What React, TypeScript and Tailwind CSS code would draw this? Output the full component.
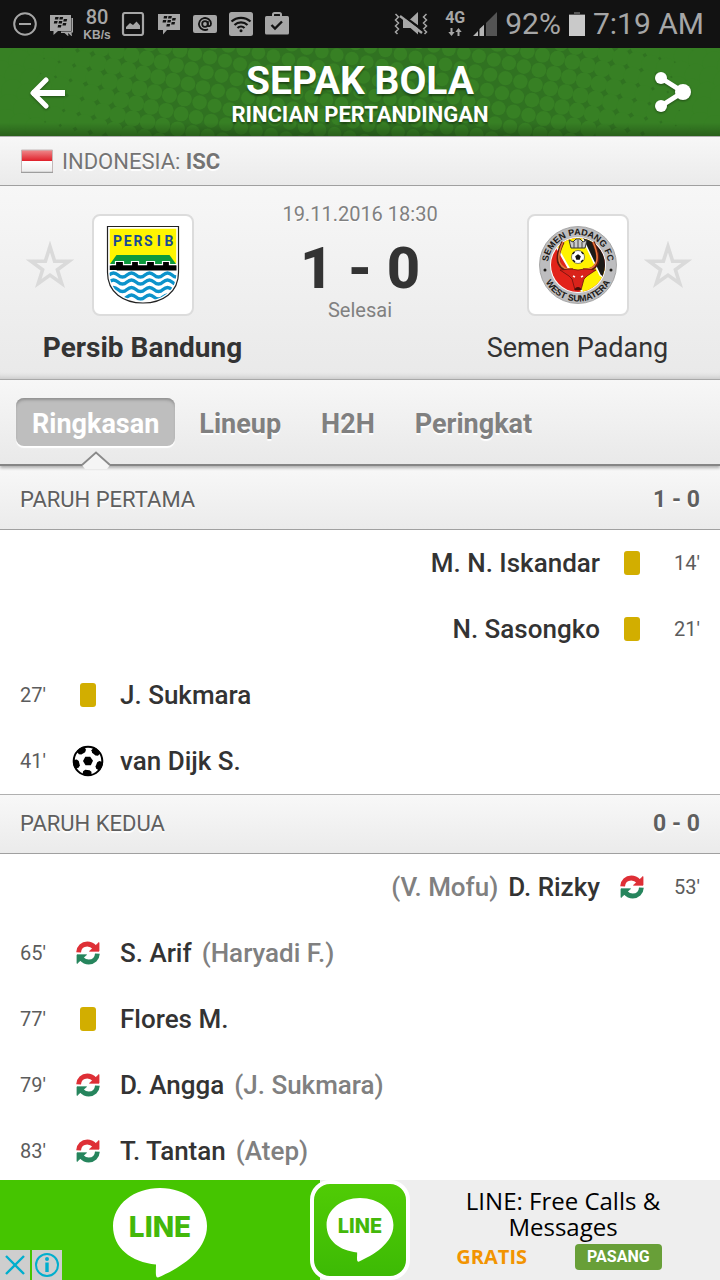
import type { ReactNode } from "react";

type Side = "home" | "away";
type Kind = "card" | "goal" | "sub";

interface MatchEvent {
  side: Side;
  kind: Kind;
  minute: string;
  player: string;
  other?: string;
}

const firstHalf: MatchEvent[] = [
  { side: "away", kind: "card", minute: "14'", player: "M. N. Iskandar" },
  { side: "away", kind: "card", minute: "21'", player: "N. Sasongko" },
  { side: "home", kind: "card", minute: "27'", player: "J. Sukmara" },
  { side: "home", kind: "goal", minute: "41'", player: "van Dijk S." },
];

const secondHalf: MatchEvent[] = [
  { side: "away", kind: "sub", minute: "53'", player: "D. Rizky", other: "(V. Mofu)" },
  { side: "home", kind: "sub", minute: "65'", player: "S. Arif", other: "(Haryadi F.)" },
  { side: "home", kind: "card", minute: "77'", player: "Flores M." },
  { side: "home", kind: "sub", minute: "79'", player: "D. Angga", other: "(J. Sukmara)" },
  { side: "home", kind: "sub", minute: "83'", player: "T. Tantan", other: "(Atep)" },
];

/* ---------- status bar ---------- */

function BbmGlyph() {
  return (
    <g fill="#121212">
      <path d="M5.5 3h3.4l-.6 2.400H5zM10 3h3.400l-.6 2.400H9.500zM4.500 7h3.400l-.6 2.400H4zM9.200 7h3.400l-.6 2.400H8.700zM14 5h3.400l-.6 2.400h-3.400zM13.200 9h3.400l-.6 2.400h-3.400zM8.300 11h3.400l-.6 2.400H7.800z" />
    </g>
  );
}

function StatusBar() {
  return (
    <div className="flex h-12 shrink-0 items-center justify-between bg-[#121212] pr-4 pl-[13px] text-[#a6a6a6]">
      <div className="flex items-center gap-3">
        <svg className="h-6 w-6" viewBox="0 0 24 24" fill="none" stroke="currentColor" strokeWidth="2">
          <circle cx="12" cy="12" r="10.800" />
          <path d="M6 12h12" />
        </svg>
        <svg className="h-6 w-6" viewBox="0 0 24 24" fill="currentColor">
          <path d="M22.500 6h1.500v14.500h-1.500l.5 4-4-3.500.5 3.500-4-3.500h-3.500v-1.500h10.500z" />
          <path d="M1 3h21v16H9l-4.500 4v-4H1z" />
          <g transform="translate(.8 2)">
            <BbmGlyph />
          </g>
        </svg>
        <div className="flex w-6 flex-col items-center">
          <span className="font-[Roboto] text-xl leading-[22px] font-medium">80</span>
          <span className="font-['Liberation_Sans'] text-xs leading-[14px] font-bold">KB/s</span>
        </div>
        <svg className="h-6 w-6" viewBox="0 0 24 24">
          <rect x="2" y="1" width="20" height="22" rx="2" fill="none" stroke="currentColor" strokeWidth="2.200" />
          <path d="M5 17v-2l4-4 3 2 3.500-3.500L19 13.500V17z" fill="currentColor" />
        </svg>
        <svg className="h-6 w-6" viewBox="0 0 24 24" fill="currentColor">
          <path d="M1 2h22v16H10l-4 4.500V18H1z" />
          <g transform="translate(1.500 1)">
            <BbmGlyph />
          </g>
        </svg>
        <svg className="h-6 w-6" viewBox="0 0 24 24">
          <rect x="0" y="3" width="24" height="18" rx="2" fill="currentColor" />
          <g fill="none" stroke="#121212" strokeWidth="1.800">
            <circle cx="12" cy="12" r="2.800" />
            <path d="M14.800 9v4.200c0 1.600 3.200 1.400 3.200-1.400a6 6 0 1 0-3 5.400" />
          </g>
        </svg>
        <svg className="h-6 w-6" viewBox="0 0 24 24">
          <rect x="0" y="0" width="24" height="24" rx="2.500" fill="currentColor" />
          <g fill="none" stroke="#121212" strokeWidth="2.200">
            <path d="M2.500 9.500a14 14 0 0 1 19 0M5.500 13a9.500 9.500 0 0 1 13 0M8.500 16a5 5 0 0 1 7 0" />
          </g>
          <circle cx="12" cy="18.800" r="1.500" fill="#121212" />
        </svg>
        <svg className="h-6 w-6" viewBox="0 0 24 24">
          <path d="M8 5V2.500Q8 1 9.500 1h5Q16 1 16 2.500V5" fill="none" stroke="currentColor" strokeWidth="2" />
          <rect x="0" y="4" width="24" height="18.500" rx="1.500" fill="currentColor" />
          <path d="M6.500 13l3.500 3.500 7-7" fill="none" stroke="#121212" strokeWidth="2.400" />
        </svg>
      </div>
      <div className="flex items-center">
        <svg className="mr-4 h-6 w-9" viewBox="0 0 36 24" fill="currentColor">
          <path d="M2.500 2l3 3-3 3 3 3-3 3 3 3-3 3 2 2M33.500 2l-3 3 3 3-3 3 3 3-3 3 3 3-2 2" fill="none" stroke="currentColor" strokeWidth="1.500" />
          <path d="M25 0v22.500L17.500 16H10V7h7.500z" />
          <path d="M7 1.500l23 17" stroke="#121212" strokeWidth="2.500" />
          <path d="M7 4l22 17" stroke="currentColor" strokeWidth="2.400" />
        </svg>
        <div className="mr-2 flex flex-col items-center">
          <span className="font-[Roboto] text-base leading-3 font-bold">4G</span>
          <svg className="mt-1 h-2 w-4" viewBox="0 0 16 8" fill="currentColor">
            <path d="M3.500 0h2v4h2.200L4.500 8 1.300 4h2.200zM10.500 8h2V4h2.200L11.500 0 8.300 4h2.200z" />
          </svg>
        </div>
        <svg className="mr-2 h-6 w-6" viewBox="0 0 24 24">
          <path d="M24 0v24H13V11z" fill="#545454" />
          <path d="M0 24l5-5v5zM6.500 24v-7L11 12.800V24z" fill="#b5b5b5" />
        </svg>
        <span className="mr-2 font-[Roboto] text-[30px] leading-9">92%</span>
        <svg className="mr-2 h-6 w-4" viewBox="0 0 16 24">
          <path d="M5 0h6v2h5v3H0V2h5z" fill="#555" />
          <path d="M0 3h16v21H0z" fill="#c9c9c9" />
        </svg>
        <span className="font-[Roboto] text-[30px] leading-9">7:19 AM</span>
      </div>
    </div>
  );
}

/* ---------- title bar ---------- */

function Halftone() {
  const dots: ReactNode[] = [];
  const pitch = 15.4;
  const angle = (13 * Math.PI) / 180;
  for (let i = -30; i <= 30; i++) {
    for (let j = -12; j <= 12; j++) {
      const x = 360 + pitch * (i * Math.cos(angle) - j * Math.sin(angle));
      const y = 44 + pitch * (i * Math.sin(angle) + j * Math.cos(angle));
      if (x < -12 || x > 732 || y < -12 || y > 100) continue;
      const t = Math.abs(x - 360) / 360;
      const r = 6.8 + 5.2 * t * t * t;
      dots.push(<circle key={`${i}:${j}`} cx={x.toFixed(1)} cy={y.toFixed(1)} r={r.toFixed(2)} />);
    }
  }
  return (
    <svg className="absolute inset-0 h-full w-full" viewBox="0 0 720 88" preserveAspectRatio="xMidYMid slice" aria-hidden="true">
      <rect width="720" height="88" fill="#307221" />
      <g fill="#378024">{dots}</g>
    </svg>
  );
}

function TitleBar() {
  return (
    <header className="relative h-22 shrink-0 bg-[#378024] text-white">
      <Halftone />
      <div className="relative flex h-full items-center justify-between bg-linear-to-b from-transparent from-85% to-black/25 px-7">
        <button type="button" aria-label="Kembali">
          <svg className="h-10 w-10 drop-shadow-[0_1px_1px_rgba(0,0,0,0.4)]" viewBox="0 0 40 40" fill="none" stroke="currentColor">
            <path d="M34 21H7" strokeLinecap="square" strokeWidth="6" />
            <path d="M18 8L5 21l13 13" strokeLinecap="round" strokeLinejoin="round" strokeWidth="5" />
          </svg>
        </button>
        <div className="pt-1.5 text-center font-[Roboto] [text-shadow:0_2px_2px_rgba(0,0,0,0.4)]">
          <h1 className="text-[39px] leading-10 font-bold">SEPAK BOLA</h1>
          <p className="text-[22px] leading-7 font-bold">RINCIAN PERTANDINGAN</p>
        </div>
        <button type="button" aria-label="Bagikan">
          <svg className="h-10 w-10 drop-shadow-[0_1px_1px_rgba(0,0,0,0.4)]" viewBox="0 0 40 40" fill="currentColor">
            <path d="M9 6l22 14L9 34" fill="none" stroke="currentColor" strokeWidth="5" />
            <circle cx="9" cy="6" r="6" />
            <circle cx="9" cy="34" r="6" />
            <circle cx="31" cy="20" r="8" />
          </svg>
        </button>
      </div>
    </header>
  );
}

/* ---------- crests ---------- */

function Star() {
  return (
    <svg className="h-12 w-12" viewBox="0 0 48 48" fill="none" stroke="#dadada" strokeWidth="3.600">
      <path d="M24 5.500l4.600 14.600 14.400.1-11.600 8.500 4.300 13.700L24 34.100l-11.700 8.300 4.300-13.700L5 20.200l14.400-.1z" />
    </svg>
  );
}

function PersibCrest() {
  const wave = "q4.500-4 9 0t9 0 9 0 9 0 9 0 9 0 9 0 9 0";
  return (
    <svg className="h-20 w-20" viewBox="0 0 80 80" role="img" aria-label="Persib">
      <clipPath id="shield">
        <path d="M4.500 1.500h71v46c0 20-16 30.500-35.500 30.500S4.500 67.500 4.500 47.500z" />
      </clipPath>
      <g clipPath="url(#shield)">
        <rect width="80" height="80" fill="#fff" />
        <rect x="6.500" y="3.500" width="67" height="35" fill="#fff500" />
        <path d="M7 39l6.500-9h53l6.500 9z" fill="#0c9a3d" />
        <path d="M6.500 40h6v-3.500h8V40h8v-3.500h7V40h8v-3.500h8V40h8v-3.500h7V40h15v6h-68z" fill="#000" stroke="#fff" strokeWidth="1.200" />
        <path d="M6.500 40.500h67v4.500h-67z" fill="#000" />
        <g fill="none" stroke="#0c93cb" strokeWidth="3.400">
          <path d={"M6 50" + wave} />
          <path d={"M6 57" + wave} />
          <path d={"M6 64.500" + wave} />
          <path d={"M6 72" + wave} />
        </g>
      </g>
      <path d="M4.500 1.500h71v46c0 20-16 30.500-35.500 30.500S4.500 67.500 4.500 47.500z" fill="none" stroke="#fff" strokeWidth="4" clipPath="url(#shield)" />
      <path d="M4.500 1.500h71v46c0 20-16 30.500-35.500 30.500S4.500 67.500 4.500 47.500z" fill="none" stroke="#222" strokeWidth="1.200" />
      <g fill="#174a94" fontFamily="Roboto, sans-serif" fontWeight="700" fontSize="14" textAnchor="middle">
        {["P", "E", "R", "S", "I", "B"].map((c, i) => (
          <text key={i} x={14.5 + i * 10.3} y="21">
            {c}
          </text>
        ))}
      </g>
    </svg>
  );
}

function PadangCrest() {
  return (
    <svg className="h-20 w-20" viewBox="0 0 80 80" role="img" aria-label="Semen Padang FC West Sumatera">
      <defs>
        <clipPath id="disc">
          <circle cx="40" cy="40" r="27" />
        </clipPath>
        <path id="arcTop" d="M10 40a30 30 0 0 1 60 0" />
        <path id="arcBottom" d="M3.500 40a36.500 36.500 0 0 0 73 0" />
      </defs>
      <circle cx="40" cy="40" r="38.500" fill="#bdbdbf" stroke="#999" strokeWidth=".8" />
      <circle cx="40" cy="40" r="28" fill="#fff" />
      <g clipPath="url(#disc)">
        <rect width="80" height="80" fill="#e2231a" />
        <path d="M17 19L30 8h20l26 55-28 14z" fill="#fff200" />
        <path d="M17 19L50 77" stroke="#fff" strokeWidth="2" />
        <path d="M42 8h30v50L62 50z" fill="#1c1a17" stroke="#fff" strokeWidth="1.500" />
      </g>
      <path d="M25 17c-10 20-3 29 10 28M55 17c10 20 3 29-10 28" fill="none" stroke="#5a1a10" strokeWidth="3.400" />
      <path d="M25 17c-9 20-2 28 10 27.500M55 17c9 20 2 28-10 27.500" fill="none" stroke="#e8743a" strokeWidth="1.600" />
      <path d="M31 15l4 2 3-3h4l3 3 4-2-2 8H33z" fill="#ccc" stroke="#333" />
      <path d="M36 17v6M40 15v8M44 17v6" stroke="#444" strokeWidth="1" />
      <circle cx="40" cy="32" r="6.500" fill="#fff" stroke="#333" strokeWidth=".6" />
      <path d="M40 30l2 1.500-.8 2.500h-2.400l-.8-2.500zM34.500 29l2-2M43.500 27l2 2M35 35l2 2M45 35l-2 2" fill="#111" stroke="#111" strokeWidth="1.400" />
      <path d="M22 45l11-1 7 1 7-1 11 1-9 6-3 3-3 11h-6l-3-11-3-3z" fill="#d9231b" stroke="#6b120c" strokeWidth=".8" />
      <path d="M35 51l2 1M45 51l-2 1" stroke="#fff" strokeWidth="1.500" />
      <path d="M36.500 65c.5-4 6.500-4 7 0z" fill="#4a0e08" />
      <g fill="#1c1a17" fontFamily="'Liberation Sans', sans-serif" fontWeight="700" fontSize="9">
        <text textAnchor="middle">
          <textPath href="#arcTop" startOffset="50%">SEMEN PADANG FC</textPath>
        </text>
        <text textAnchor="middle">
          <textPath href="#arcBottom" startOffset="50%">WEST SUMATERA</textPath>
        </text>
      </g>
      <circle cx="7" cy="45" r="1.500" fill="#1c1a17" />
      <circle cx="73" cy="45" r="1.500" fill="#1c1a17" />
    </svg>
  );
}

function CrestBox({ children }: { children: ReactNode }) {
  return (
    <div className="flex h-[102px] w-[102px] items-center justify-center rounded-lg border-2 border-[#dcdcdc] bg-white">
      {children}
    </div>
  );
}

/* ---------- events ---------- */

function EventIcon({ kind }: { kind: Kind }) {
  if (kind === "card") return <span className="h-6 w-4 rounded-[3px] bg-[#d2ae00]" role="img" aria-label="Kartu kuning" />;
  if (kind === "goal") {
    return (
      <svg className="h-8 w-8" viewBox="0 0 32 32" role="img" aria-label="Gol">
        <clipPath id="ball">
          <circle cx="16" cy="16" r="15" />
        </clipPath>
        <circle cx="16" cy="16" r="14.500" fill="#fff" />
        <g clipPath="url(#ball)" fill="#000">
          {[0, 72, 144, 216, 288].map((a) => (
            <path key={a} d="M11.500 30l.3-3.500 2-1.500h4.400l2 1.500.3 3.500-2 3h-5z" transform={`rotate(${a + 4} 16 16)`} />
          ))}
          <path d="M13.300 11.800h4.900l2.800 4-2.200 4.400h-5.300L11 16z" />
        </g>
        <circle cx="16" cy="16" r="14.300" fill="none" stroke="#000" strokeWidth="2" />
      </svg>
    );
  }
  return (
    <svg className="h-6 w-6" viewBox="0 0 24 24" role="img" aria-label="Pergantian pemain">
      <path d="M2.600 11.300C2.900 6.300 6.500 3 11.300 3c3 0 5 1 7.500 3.500" fill="none" stroke="#de2f36" strokeWidth="4.800" />
      <path d="M23 1.500v8.700h-9.500z" fill="#de2f36" stroke="#de2f36" strokeWidth=".8" />
      <path d="M21.400 12.700C21.100 17.700 17.500 21 12.700 21c-3 0-5-1-7.500-3.500" fill="none" stroke="#26855d" strokeWidth="4.800" />
      <path d="M1 22.500v-8.700h9.500z" fill="#26855d" stroke="#26855d" strokeWidth=".8" />
    </svg>
  );
}

function EventRow({ event }: { event: MatchEvent }) {
  const away = event.side === "away";
  return (
    <li className={away ? "flex h-[66px] flex-row-reverse items-center px-5" : "flex h-[66px] items-center px-5"}>
      <span className={away ? "w-12 text-right text-xl text-[#5c5c5c]" : "w-12 text-xl text-[#5c5c5c]"}>{event.minute}</span>
      <span className="flex w-10 justify-center">
        <EventIcon kind={event.kind} />
      </span>
      <span className={away ? "flex flex-row-reverse gap-2.5 pr-3 text-[26px] font-medium text-[#333]" : "flex gap-2.5 pl-3 text-[26px] font-medium text-[#333]"}>
        <span>{event.player}</span>
        {event.other && <span className="text-[#808080]">{event.other}</span>}
      </span>
    </li>
  );
}

function HalfHeader({ title, score, first }: { title: string; score: string; first?: boolean }) {
  return (
    <div
      className={
        (first ? "h-16 pt-1 " : "h-[60px] border-t border-t-[#b0b0b0] ") +
        "flex items-center justify-between border-b border-b-[#a0a0a0] bg-linear-to-b from-[#f8f8f8] to-[#ebebeb] px-5 text-[#5f5f5f] [text-shadow:0_2px_1px_#fff]"
      }
    >
      <h2 className="text-[22px] leading-7">{title}</h2>
      <span className="text-[23px] leading-7 font-bold">{score}</span>
    </div>
  );
}

function LineBubble({ className }: { className: string }) {
  return (
    <svg className={className} viewBox="0 0 94 90" role="img" aria-label="LINE">
      <path d="M47 0c26 0 47 16.500 47 38 0 26-29 43-49 51.500-3 0-2-5-2-13C18 74 0 60 0 38 0 16.500 21 0 47 0z" fill="#fff" />
      <text x="47" y="49" fill="#43b80a" fontFamily="Inter, sans-serif" fontWeight="800" fontSize="28" textAnchor="middle">
        LINE
      </text>
    </svg>
  );
}

function AdBanner() {
  return (
    <aside className="relative flex h-25 shrink-0 bg-[#eee]">
      <div className="flex w-4/9 justify-center bg-[#45c500] pt-2">
        <LineBubble className="h-[90px] w-[94px]" />
      </div>
      <div className="-ml-[10px] flex w-25 shrink-0 items-center justify-center rounded-[20px] border-4 border-white bg-linear-to-b from-[#50cc05] to-[#3dba05]">
        <LineBubble className="h-16 w-[68px]" />
      </div>
      <div className="flex flex-1 flex-col items-center pt-2 pr-1 font-['Open_Sans']">
        <p className="w-56 text-center text-2xl leading-[26px] text-black">LINE: Free Calls &amp; Messages</p>
        <div className="mt-1 mr-2 flex items-center gap-12">
          <span className="text-xl leading-6 font-bold text-[#f29400]">GRATIS</span>
          <button type="button" className="h-[26px] rounded-sm bg-[#689f38] px-3 font-[Roboto] text-base leading-6 font-bold text-white">
            PASANG
          </button>
        </div>
      </div>
      <div className="absolute bottom-0 left-0 flex gap-[2px]">
        <button type="button" aria-label="Tutup iklan" className="bg-[#cecece]">
          <svg className="h-[30px] w-[30px]" viewBox="0 0 30 30" stroke="#00aecd" strokeWidth="2.400">
            <path d="M6 6l18 18M24 6L6 24" />
          </svg>
        </button>
        <button type="button" aria-label="Info iklan" className="bg-[#cecece]">
          <svg className="h-[30px] w-[30px]" viewBox="0 0 30 30" fill="none" stroke="#00aecd" strokeWidth="2">
            <circle cx="15" cy="15" r="11" />
            <path d="M15 12.500V22" strokeWidth="3.400" />
            <circle cx="15" cy="9" r="1" />
          </svg>
        </button>
      </div>
    </aside>
  );
}

const tabs = ["Ringkasan", "Lineup", "H2H", "Peringkat"];

export default function App() {
  return (
    <div className="flex h-screen flex-col bg-white font-[Roboto,sans-serif]">
      <StatusBar />
      <TitleBar />
      <div className="flex h-[50px] shrink-0 items-center border-y border-t-[#b0b0b0] border-b-[#a0a0a0] bg-linear-to-b from-[#f7f7f7] to-[#ebebeb] px-5 text-[22px] text-[#747474] [text-shadow:0_2px_1px_#fff]">
        <svg className="mr-2 h-6 w-[34px]" viewBox="0 0 34 24" role="img" aria-label="Indonesia">
          <linearGradient id="red" x2="0" y2="1">
            <stop stopColor="#ef8b8d" />
            <stop offset="1" stopColor="#e0202a" />
          </linearGradient>
          <linearGradient id="white" x2="0" y2="1">
            <stop stopColor="#fff" />
            <stop offset="1" stopColor="#ececec" />
          </linearGradient>
          <rect x="1.500" y="1" width="31" height="11" fill="url(#red)" />
          <rect x="1.500" y="12" width="31" height="11" fill="url(#white)" />
          <path d="M1.500 23V1h31v22" fill="none" stroke="#c4b8b8" />
          <path d="M1 23.300h32" stroke="#8a8a8a" />
        </svg>
        <p>
          INDONESIA: <strong>ISC</strong>
        </p>
      </div>

      <section className="flex h-[194px] shrink-0 border-b border-[#ababab] bg-linear-to-b from-[#f7f7f7] to-[#e9e9e9] pt-7 shadow-[inset_0_-7px_5px_-5px_#c8c8c8]">
        <div className="flex flex-1 flex-col items-center">
          <div className="grid w-full grid-cols-[1fr_auto_1fr] items-center">
            <button type="button" aria-label="Favoritkan Persib Bandung" className="flex justify-center pl-2">
              <Star />
            </button>
            <CrestBox>
              <PersibCrest />
            </CrestBox>
          </div>
          <h2 className="mt-3 text-[28px] leading-10 font-bold text-[#333]">Persib Bandung</h2>
        </div>
        <div className="flex w-[150px] shrink-0 flex-col items-center text-[#808080]">
          <time className="-mt-3 text-xl leading-6 whitespace-nowrap [text-shadow:0_1px_1px_#fff]">19.11.2016 18:30</time>
          <p className="mt-3 text-[58px] leading-[60px] font-extrabold whitespace-nowrap text-[#333]">1 - 0</p>
          <p className="text-xl leading-6">Selesai</p>
        </div>
        <div className="flex flex-1 flex-col items-center">
          <div className="grid w-full grid-cols-[1fr_auto_1fr] items-center">
            <span />
            <CrestBox>
              <PadangCrest />
            </CrestBox>
            <button type="button" aria-label="Favoritkan Semen Padang" className="flex justify-center pr-3">
              <Star />
            </button>
          </div>
          <h2 className="mt-3 text-[27px] leading-10 text-[#333]">Semen Padang</h2>
        </div>
      </section>

      <nav className="relative z-10 flex h-[86px] shrink-0 items-center gap-2 border-b-2 border-[#858585] bg-linear-to-b from-[#f7f7f7] to-[#e9e9e9] px-4 shadow-[0_2px_3px_rgba(0,0,0,0.3)]">
        {tabs.map((t, i) =>
          i === 0 ? (
            <button key={t} type="button" aria-current="page" className="relative h-12 rounded-lg bg-[#bebebe] px-4 pt-1 text-[27px] font-bold text-white shadow-[inset_0_3px_3px_-1px_#909090,0_2px_1px_#fff]">
              {t}
              <svg className="absolute top-[53px] left-1/2 h-[18px] w-8 -translate-x-1/2" viewBox="0 0 32 18">
                <path d="M2 14L16 1.500l14 12.500-3 4H5z" fill="#f5f5f5" />
                <path d="M2 14L16 1.500l14 12.500" fill="none" stroke="#8a8a8a" strokeWidth="1.800" />
              </svg>
            </button>
          ) : (
            <button key={t} type="button" className="h-12 px-4 pt-1 text-[27px] font-bold text-[#808080] [text-shadow:0_2px_1px_#fff]">
              {t}
            </button>
          ),
        )}
      </nav>

      <main className="min-h-0 flex-1 overflow-y-auto [scrollbar-width:none]">
        <HalfHeader title="PARUH PERTAMA" score="1 - 0" first />
        <ul>
          {firstHalf.map((e) => (
            <EventRow key={e.minute} event={e} />
          ))}
        </ul>
        <HalfHeader title="PARUH KEDUA" score="0 - 0" />
        <ul>
          {secondHalf.map((e) => (
            <EventRow key={e.minute} event={e} />
          ))}
        </ul>
      </main>
      <AdBanner />
    </div>
  );
}
